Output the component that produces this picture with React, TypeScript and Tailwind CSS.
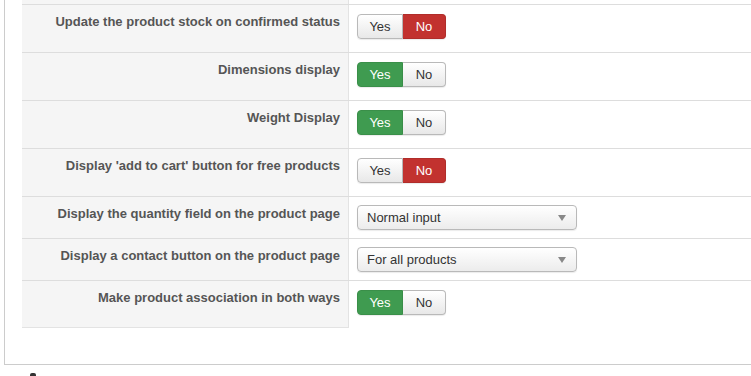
const rows: { label: string; kind: "toggle" | "select"; value: string; h: string }[] = [
  { label: "Update the product stock on confirmed status", kind: "toggle", value: "no", h: "h-[48px]" },
  { label: "Dimensions display", kind: "toggle", value: "yes", h: "h-[48px]" },
  { label: "Weight Display", kind: "toggle", value: "yes", h: "h-[48px]" },
  { label: "Display 'add to cart' button for free products", kind: "toggle", value: "no", h: "h-[48px]" },
  { label: "Display the quantity field on the product page", kind: "select", value: "Normal input", h: "h-[42px]" },
  { label: "Display a contact button on the product page", kind: "select", value: "For all products", h: "h-[42px]" },
  { label: "Make product association in both ways", kind: "toggle", value: "yes", h: "h-[48px]" },
]

function Toggle({ value }: { value: string }) {
  const off = "bg-gradient-to-b from-white to-[#e8e8e8] text-[#333] border-[#b9b9b9]"
  return (
    <div className="flex h-[25px] text-[13px] leading-none">
      <div
        className={
          "flex w-[46px] items-center justify-center rounded-l-[4px] border shadow-[0_1px_1px_rgba(0,0,0,0.08)] " +
          (value === "yes" ? "bg-[#3f9b50] text-white border-[#3a8f49]" : off)
        }
      >
        Yes
      </div>
      <div
        className={
          "flex w-[43px] items-center justify-center rounded-r-[4px] border border-l-0 shadow-[0_1px_1px_rgba(0,0,0,0.08)] " +
          (value === "no" ? "bg-[#c2322f] text-white border-[#b02d2a]" : off)
        }
      >
        No
      </div>
    </div>
  )
}

function Select({ value }: { value: string }) {
  return (
    <div className="flex h-[25px] w-[220px] items-center justify-between rounded-[4px] border border-[#b9b9b9] bg-gradient-to-b from-white to-[#ececec] pl-[9px] pr-[10px] text-[13px] text-[#333] shadow-[0_1px_1px_rgba(0,0,0,0.08)]">
      <span>{value}</span>
      <span className="h-0 w-0 border-x-[4px] border-t-[6px] border-x-transparent border-t-[#888]" />
    </div>
  )
}

export default function App() {
  return (
    <div className="h-[376px] w-[751px] overflow-hidden bg-white font-['Liberation_Sans',Arial,sans-serif]">
      <div className="ml-[4px] border-b border-l border-[#cccccc] pb-[36px] pl-[17px]">
        <div className="flex h-[4px]">
          <div className="w-[327px] border-r border-[#e3e3e3] bg-[#f5f5f5]" />
        </div>
        {rows.map((r, i) => (
          <div key={i} className={"flex border-t border-[#dddddd] " + r.h}>
            <div
              className={
                "w-[327px] border-r border-[#e3e3e3] bg-[#f5f5f5] pr-[8px] pt-[8px] text-right text-[13px] font-bold leading-[18px] text-[#555] " +
                (i === rows.length - 1 ? "border-b" : "")
              }
            >
              {r.label}
            </div>
            <div className={"pl-[8px] " + (r.kind === "toggle" ? "pt-[9px]" : "pt-[8px]")}>
              {r.kind === "toggle" ? <Toggle value={r.value} /> : <Select value={r.value} />}
            </div>
          </div>
        ))}
      </div>
      <div className="pl-[30px] pt-[8px]">
        <div className="h-[4px] w-[6px] rounded-t-[2px] bg-[#333]" />
      </div>
    </div>
  )
}
